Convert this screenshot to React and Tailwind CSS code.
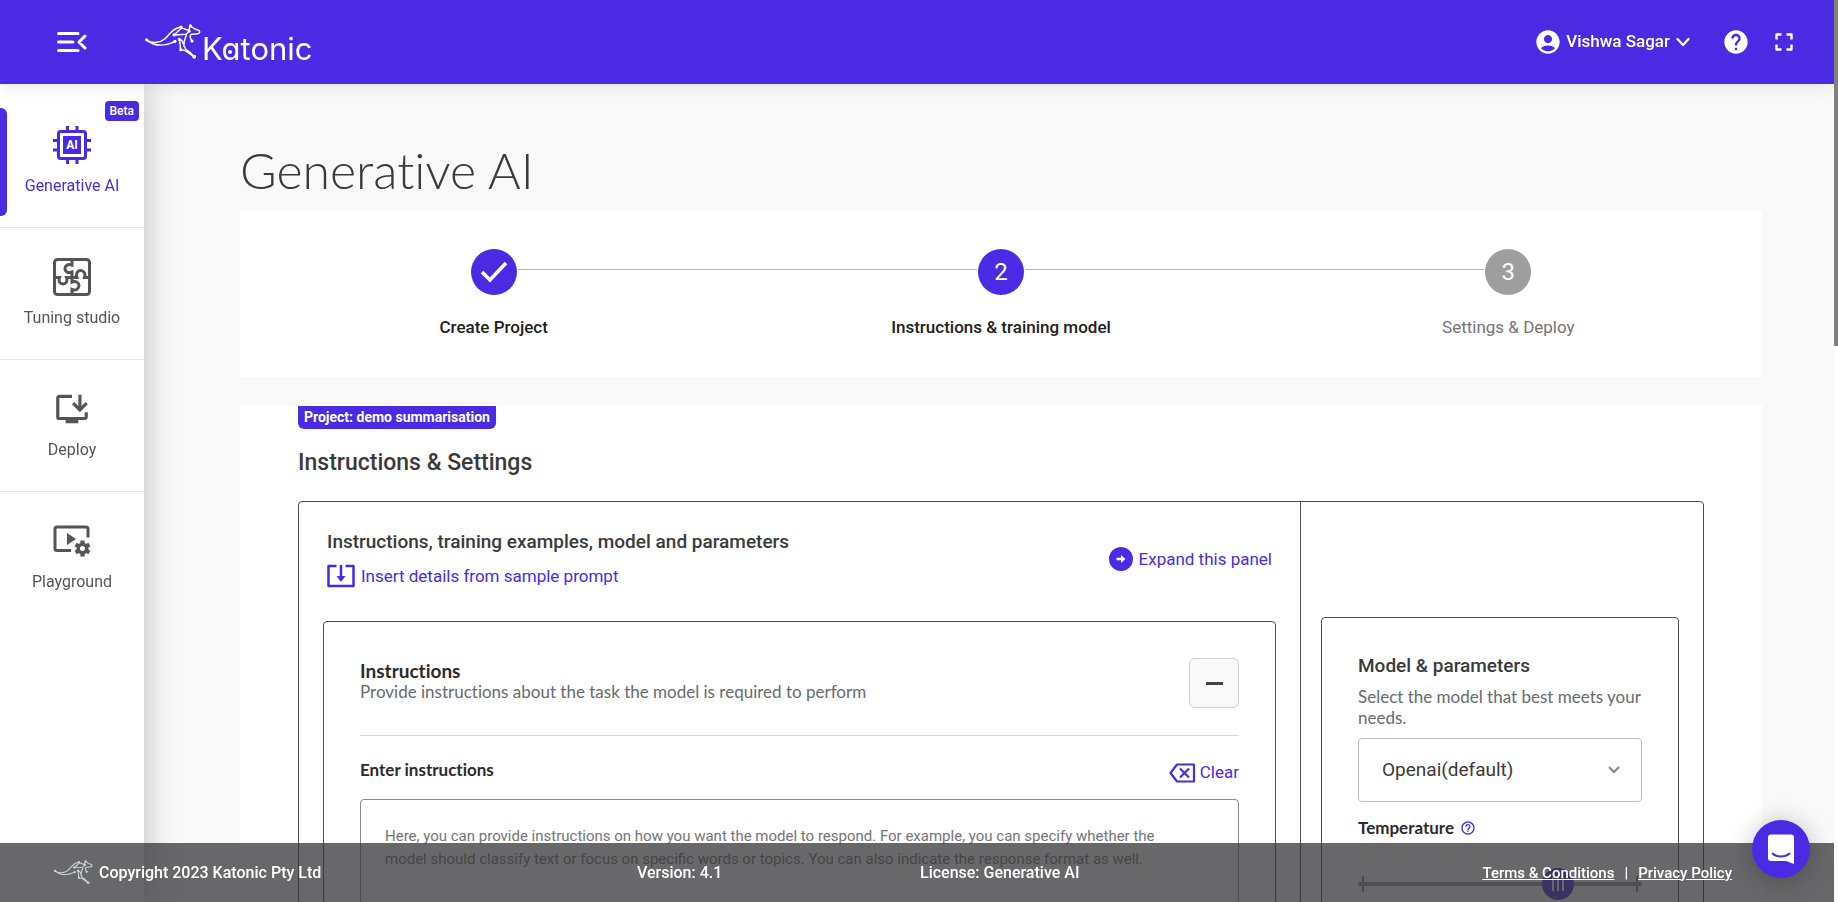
import React, { useState } from 'react';
import { MdAccountCircle, MdHelp, MdOutlineInstallDesktop, MdHelpOutline } from 'react-icons/md';

const Kangaroo = ({ className }) => (
  <svg viewBox="0 0 174 112" className={className} fill="none" stroke="currentColor" strokeWidth="4.500" strokeLinecap="round" strokeLinejoin="round" aria-hidden="true">
    <path d="M5 50C25 62 48 58 62 46C78 32 82 16 108 10L135 20L141 6L152 14L169 21C172 27 168 31 160 31L144 32C138 36 140 44 146 52" />
    <path d="M5 50C28 68 60 70 92 55" />
    <path d="M90 34L128 32L139 22M90 34L112 14" />
    <path d="M107 48L111 80L124 82L153 102M107 48L114 50L126 78L140 88L153 102M128 36L122 54L121 70" />
    <g fill="currentColor" stroke="none">
      <circle cx="5" cy="49" r="5" />
      <circle cx="112" cy="10" r="5" />
      <circle cx="141" cy="6" r="5" />
      <circle cx="137" cy="22" r="5" />
      <circle cx="90" cy="34" r="5" />
      <circle cx="93" cy="54" r="5" />
      <circle cx="107" cy="48" r="5" />
      <circle cx="146" cy="53" r="5" />
      <circle cx="111" cy="80" r="5" />
      <circle cx="153" cy="102" r="6" />
    </g>
  </svg>
);

const Logo = () => (
  <div className="flex items-start pt-[6px] text-white">
    <Kangaroo className="h-9 w-[58px]" />
    <svg viewBox="0 0 124 42" className="h-[42px] w-[124px]" role="img" aria-label="Katonic">
      <text x="0" y="36" fill="currentColor" fontSize="31" className="font-['Inter',sans-serif] font-normal [font-feature-settings:'cv11']">Katonic</text>
      <circle cx="28" cy="28" r="2" fill="currentColor" />
    </svg>
  </div>
);

const ChipIcon = () => (
  <svg viewBox="0 0 38 38" className="h-[38px] w-[38px]" fill="none" stroke="currentColor" aria-hidden="true">
    <rect x="5.5" y="5.5" width="27" height="27" rx="2" strokeWidth="3" />
    <rect x="10" y="10" width="18" height="18" fill="currentColor" stroke="none" />
    <path d="M14.5 0V5M24 0V5M14.5 33V38M24 33V38M0 14.5H5M0 24H5M33 14.5H38M33 24H38" strokeWidth="3" />
    <text x="19" y="23" textAnchor="middle" fontSize="12" fill="white" stroke="none" className="font-['Roboto',sans-serif] font-bold">AI</text>
  </svg>
);

const PuzzleIcon = () => (
  <svg viewBox="0 0 38 38" className="h-[38px] w-[38px]" fill="none" stroke="currentColor" strokeWidth="3" aria-hidden="true">
    <rect x="1.5" y="1.5" width="35" height="35" rx="3" />
    <path d="M19 2V7C15 5.500 12 7.500 12 10.500C12 14 15.500 15.500 19 14V19.500" />
    <path d="M2 19.500H6.500C5 23.500 7 26 10 26C13 26 15 23.500 13.500 19.500H24C22.500 15.500 24.500 12.500 27.500 12.500C30.500 12.500 33 15.500 31.500 19.500H36" />
    <path d="M19 19.500V24C23 22.500 26 25 26 27.500C26 30.500 23 33 19 31.500V36" />
  </svg>
);

const PlaygroundIcon = () => (
  <svg viewBox="0 0 38 32" className="h-8 w-[38px]" aria-hidden="true">
    <path d="M18 25.500H4A2 2 0 0 1 2 23.500V4A2 2 0 0 1 4 2H33A2 2 0 0 1 35 4V12.500" fill="none" stroke="currentColor" strokeWidth="3" />
    <path d="M14 8V20L23 14Z" fill="currentColor" />
    <g transform="translate(29.500 23.500)">
      <circle r="4.300" fill="none" stroke="currentColor" strokeWidth="3.400" />
      <path d="M0 -8V-5M0 8V5M6.900 -4L4.300 -2.500M6.900 4L4.300 2.500M-6.900 -4L-4.300 -2.500M-6.900 4L-4.300 2.500" stroke="currentColor" strokeWidth="4.200" />
    </g>
  </svg>
);

const navItems = [
  { label: 'Generative AI', icon: <ChipIcon />, active: true, badge: 'Beta' },
  { label: 'Tuning studio', icon: <PuzzleIcon /> },
  { label: 'Deploy', icon: <MdOutlineInstallDesktop size={38} /> },
  { label: 'Playground', icon: <PlaygroundIcon /> },
];

const steps = [
  { label: 'Create Project', state: 'done' },
  { label: 'Instructions & training model', state: 'current' },
  { label: 'Settings & Deploy', state: 'todo' },
];

const Header = () => (
  <header className="relative z-20 flex h-[84px] shrink-0 items-center justify-between bg-[#4a2be3] pr-10 pl-14 text-white shadow-[0_2px_16px_rgba(0,0,0,0.1)]">
    <div className="flex items-center gap-14">
      <button type="button" aria-label="Collapse menu">
        <svg viewBox="0 0 32 22" className="h-[22px] w-8" fill="none" stroke="currentColor" strokeWidth="3" strokeLinecap="round" strokeLinejoin="round">
          <path d="M2.500 2.500H22M2.500 11H17M2.500 19.500H22M29 5L23 11L29 17" />
        </svg>
      </button>
      <a href="#home"><Logo /></a>
    </div>
    <div className="flex items-center">
      <button type="button" className="flex items-center text-[17px] font-medium">
        <MdAccountCircle size={28} />
        <span className="ml-1">Vishwa Sagar</span>
        <svg viewBox="0 0 14 10" className="ml-[6px] h-[10px] w-[14px]" fill="none" stroke="currentColor" strokeWidth="2.200" strokeLinecap="round" strokeLinejoin="round">
          <path d="M1.500 2L7 8L12.500 2" />
        </svg>
      </button>
      <button type="button" aria-label="Help" className="ml-8"><MdHelp size={28} /></button>
      <button type="button" aria-label="Full screen" className="ml-6">
        <svg viewBox="0 0 20 20" className="h-5 w-5" fill="none" stroke="currentColor" strokeWidth="2.400" strokeLinejoin="round">
          <path d="M2.500 7.500V2.500H7.500M12.500 2.500H17.500V7.500M17.500 12.500V17.500H12.500M7.500 17.500H2.500V12.500" />
        </svg>
      </button>
    </div>
  </header>
);

const Sidebar = () => (
  <nav className="z-10 w-36 shrink-0 bg-white pt-3 text-[#555] shadow-[0_0_32px_rgba(0,0,0,0.25)]">
    {navItems.map((item) => (
      <a
        key={item.label}
        href="#nav"
        className={`relative flex h-33 flex-col items-center border-b border-gray-200 pt-[29px] last:border-b-0 ${item.active ? 'text-[#4a2be3]' : ''}`}
      >
        {item.active && <span className="absolute top-3 left-0 h-27 w-[7px] rounded-r-md bg-[#4a2be3]" />}
        {item.badge && (
          <span className="absolute top-[5px] right-[5px] rounded bg-[#4a2be3] px-[5px] text-xs leading-5 font-medium text-white">{item.badge}</span>
        )}
        <span className="flex h-10 items-center">{item.icon}</span>
        <span className="mt-[9px]">{item.label}</span>
      </a>
    ))}
  </nav>
);

const Stepper = () => (
  <ol className="flex bg-white pt-[38px] pb-9">
    {steps.map((step, idx) => (
      <li key={step.label} className="relative flex flex-1 flex-col items-center gap-5">
        {idx > 0 && <span className="absolute top-5 right-1/2 left-[-50%] mx-6 h-px bg-[#b5b5b5]" />}
        <span className={`flex size-[46px] items-center justify-center rounded-full text-2xl text-white ${step.state === 'todo' ? 'bg-[#9e9e9e]' : 'bg-[#4a2be3]'}`}>
          {step.state === 'done' ? (
            <svg viewBox="0 0 28 22" className="h-[22px] w-7" fill="none" stroke="currentColor" strokeWidth="3.600" aria-label="Done">
              <path d="M2 11L10 19L26 2" />
            </svg>
          ) : idx + 1}
        </span>
        <span className={step.state === 'todo' ? 'text-[17px] text-[#757575]' : 'text-[17px] font-medium text-[#212121]'}>{step.label}</span>
      </li>
    ))}
  </ol>
);

const InstructionsPanel = () => {
  const [text, setText] = useState('');
  const [open, setOpen] = useState(true);

  return (
    <div className="flex-1 border-r border-[#4d4d4f] px-6 pt-7">
      <div className="flex items-center justify-between px-1">
        <div>
          <h3 className="text-[19px] leading-6 font-medium">Instructions, training examples, model and parameters</h3>
          <button type="button" className="mt-[10px] flex items-center gap-[6px] text-[17px] text-[#4a2be3]">
            <svg viewBox="0 0 28 24" className="h-6 w-7" fill="none" stroke="currentColor" strokeWidth="2.500" aria-hidden="true">
              <path d="M9.500 2H1.500V22H26.500V2H18.500" strokeLinejoin="round" />
              <path d="M14 1V14" />
              <path d="M9.500 12H18.500L14 18Z" fill="currentColor" stroke="none" />
            </svg>
            Insert details from sample prompt
          </button>
        </div>
        <button type="button" className="flex items-center gap-[6px] text-[17px] text-[#4a2be3]">
          <svg viewBox="0 0 24 24" className="h-6 w-6" aria-hidden="true">
            <circle cx="12" cy="12" r="12" fill="currentColor" />
            <path d="M7.500 12H14" fill="none" stroke="white" strokeWidth="2.600" />
            <path d="M12 8L16.500 12L12 16Z" fill="white" />
          </svg>
          Expand this panel
        </button>
      </div>

      <div className="mt-8 rounded border border-[#4d4d4f] px-9 pt-9 pb-12">
        <div className="flex items-start justify-between border-b border-[#d6d6d6] pb-[27px]">
          <div className="pt-[2px] font-['Lato',sans-serif] [font-variant-ligatures:none]">
            <h4 className="text-[19px] leading-[21px] font-bold text-[#2b2b2b]">Instructions</h4>
            <p className="text-[17px] leading-[21px] text-[#666b70]">Provide instructions about the task the model is required to perform</p>
          </div>
          <button
            type="button"
            aria-label="Toggle instructions"
            onClick={() => setOpen(!open)}
            className="flex size-[50px] items-center justify-center rounded-md border border-[#d0d0d0] bg-[#f9f9f9]"
          >
            <span className="h-[3px] w-[17px] bg-[#444]" />
          </button>
        </div>
        {open && (
          <>
            <div className="mt-6 flex items-start justify-between">
              <label htmlFor="instructions" className="font-['Lato',sans-serif] text-[17px] leading-5 font-bold text-[#2b2b2b] [font-variant-ligatures:none]">Enter instructions</label>
              <button type="button" onClick={() => setText('')} className="flex items-center gap-1 text-[17px] text-[#4a2be3]">
                <svg viewBox="0 0 27 20" className="h-5 w-[27px]" fill="none" stroke="currentColor" strokeWidth="2.200" strokeLinejoin="round" aria-hidden="true">
                  <path d="M8 1.500H25V18.500H8L1.500 10Z" />
                  <path d="M11 5.500L20 14.500M20 5.500L11 14.500" />
                </svg>
                Clear
              </button>
            </div>
            <textarea
              id="instructions"
              rows={8}
              value={text}
              onChange={(e) => setText(e.target.value)}
              placeholder="Here, you can provide instructions on how you want the model to respond. For example, you can specify whether the model should classify text or focus on specific words or topics. You can also indicate the response format as well."
              className="mt-[13px] block w-full resize-none rounded border border-[#8c8c8c] pt-[25px] pr-14 pb-6 pl-6 text-[15px] leading-[23px] placeholder:text-[#757575]"
            />
          </>
        )}
      </div>
    </div>
  );
};

const ModelPanel = () => (
  <div className="w-[402px] shrink-0 pt-[115px] pr-6 pl-5">
    <div className="rounded border border-[#4d4d4f] px-9 pt-9 pb-12">
      <h3 className="text-[19px] leading-6 font-medium">Model &amp; parameters</h3>
      <p className="mt-2 font-['Lato',sans-serif] text-[17px] leading-[21px] text-[#666b70]">Select the model that best meets your needs.</p>
      <div className="relative mt-[10px]">
        <select aria-label="Model" className="h-16 w-full appearance-none rounded border border-[#bdbdbd] bg-white px-[23px] pt-[2px] text-[19px]">
          <option>Openai(default)</option>
        </select>
        <svg viewBox="0 0 12 8" className="pointer-events-none absolute top-7 right-[22px] h-2 w-3" fill="none" stroke="#888" strokeWidth="2" aria-hidden="true">
          <path d="M1 1L6 6L11 1" />
        </svg>
      </div>
      <div className="mt-[14px] flex items-center gap-[6px]">
        <label htmlFor="temperature" className="font-['Lato',sans-serif] text-[17px] leading-6 font-bold text-[#2b2b2b]">Temperature</label>
        <MdHelpOutline size={16} className="text-[#4a2be3]" />
      </div>
      <div className="relative mt-7 flex h-8 items-center justify-between before:absolute before:inset-x-0 before:h-1 before:bg-[#9a9a9a]">
        <span className="ml-1 h-4 w-[2px] bg-[#777]" />
        <span className="mr-1 h-4 w-[2px] bg-[#777]" />
        <input
          id="temperature"
          type="range"
          min="0"
          max="1"
          step="0.01"
          defaultValue="0.73"
          className="absolute inset-0 h-8 w-full appearance-none bg-transparent [&::-webkit-slider-thumb]:size-8 [&::-webkit-slider-thumb]:appearance-none [&::-webkit-slider-thumb]:rounded-full [&::-webkit-slider-thumb]:bg-[#4a2be3] [&::-webkit-slider-thumb]:bg-[linear-gradient(90deg,transparent_10px,#fff_10px,#fff_12px,transparent_12px,transparent_15px,#fff_15px,#fff_17px,transparent_17px,transparent_20px,#fff_20px,#fff_22px,transparent_22px)] [&::-webkit-slider-thumb]:bg-[length:32px_14px] [&::-webkit-slider-thumb]:bg-center [&::-webkit-slider-thumb]:bg-no-repeat"
        />
      </div>
    </div>
  </div>
);

const Footer = () => (
  <footer className="absolute inset-x-0 bottom-0 z-30 mr-1 grid h-[59px] grid-cols-[583fr_283fr_812fr] items-center bg-[#353538]/75 pr-[102px] pl-[54px] font-medium text-white">
    <div className="flex items-center gap-[6px]">
      <Kangaroo className="h-[25px] w-[39px] text-gray-300" />
      <span>Copyright 2023 Katonic Pty Ltd</span>
    </div>
    <span>Version: 4.1</span>
    <div className="flex justify-between">
      <span>License: Generative AI</span>
      <span className="flex gap-[10px] text-[15px] leading-6">
        <a href="#terms" className="underline">Terms &amp; Conditions</a>
        <span>|</span>
        <a href="#privacy" className="underline">Privacy Policy</a>
      </span>
    </div>
  </footer>
);

const App = () => (
  <div className="relative flex h-screen flex-col overflow-hidden bg-white pr-1 font-['Roboto',sans-serif] text-[#3a3a3a]">
    <Header />
    <div className="flex min-h-0 flex-1">
      <Sidebar />
      <main className="flex-1 overflow-y-auto bg-[#f9f9f9] pr-[72px] pb-20 pl-24 [scrollbar-width:none]">
        <h1 className="pt-14 pb-[11px] font-['Lato',sans-serif] text-[50px] leading-[60px] font-light [font-variant-ligatures:none]">Generative AI</h1>
        <Stepper />
        <section className="mt-7 bg-white px-[58px] pb-12">
          <span className="inline-block rounded-b-md bg-[#4a2be3] px-[6px] text-sm leading-[23px] font-bold text-white">Project: demo summarisation</span>
          <h2 className="mt-[18px] text-[23px] leading-8 font-medium">Instructions &amp; Settings</h2>
          <div className="mt-[22px] flex rounded border border-[#4d4d4f]">
            <InstructionsPanel />
            <ModelPanel />
          </div>
        </section>
      </main>
    </div>
    <Footer />
    <button type="button" aria-label="Open chat" className="absolute right-7 bottom-6 z-40 flex size-[58px] items-center justify-center rounded-full bg-[#4a2be3] shadow-[0_2px_24px_rgba(0,0,0,0.25)]">
      <svg viewBox="0 0 28 32" className="h-8 w-7" aria-hidden="true">
        <path d="M4 1.500H24A3 3 0 0 1 27 4.500V31L19 28H4A3 3 0 0 1 1 25V4.500A3 3 0 0 1 4 1.500Z" fill="white" />
        <path d="M5.500 20.500C10 24.500 18 24.500 22.500 20.500" fill="none" stroke="#4a2be3" strokeWidth="1.800" strokeLinecap="round" />
      </svg>
    </button>
    <div className="absolute top-0 right-0 z-50 h-[346px] w-1 bg-[#808080]" />
  </div>
);

export default App;
